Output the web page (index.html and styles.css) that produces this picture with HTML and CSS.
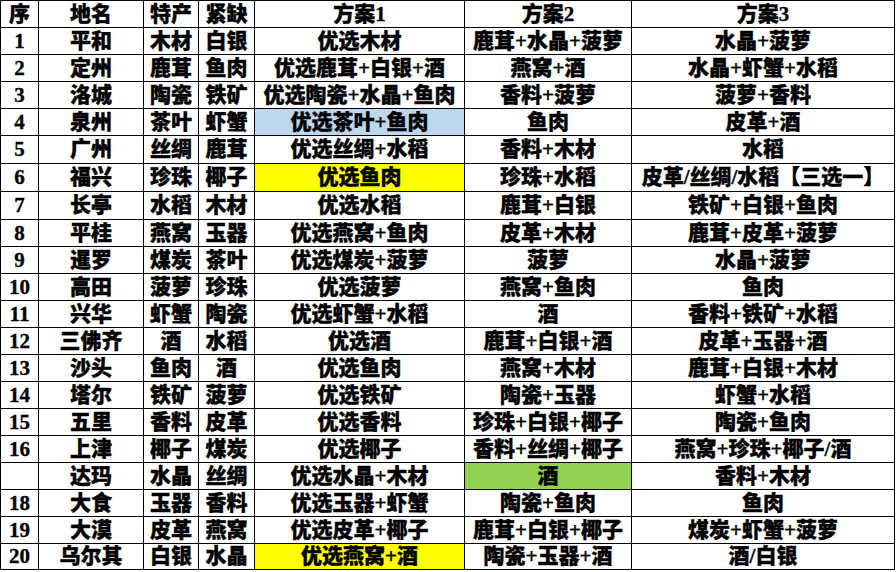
FILE: index.html
```html
<!DOCTYPE html>
<html lang="zh">
<head>
<meta charset="utf-8">
<title>方案表</title>
<link rel="stylesheet" href="styles.css">
</head>
<body>
<table class="plan">
<colgroup>
<col class="c-no"><col class="c-name"><col class="c-spec"><col class="c-lack"><col class="c-p1"><col class="c-p2"><col class="c-p3">
</colgroup>
<thead>
<tr><th>序</th><th>地名</th><th>特产</th><th>紧缺</th><th>方案1</th><th>方案2</th><th>方案3</th></tr>
</thead>
<tbody>
<tr><td>1</td><td>平和</td><td>木材</td><td>白银</td><td>优选木材</td><td>鹿茸+水晶+菠萝</td><td>水晶+菠萝</td></tr>
<tr><td>2</td><td>定州</td><td>鹿茸</td><td>鱼肉</td><td>优选鹿茸+白银+酒</td><td>燕窝+酒</td><td>水晶+虾蟹+水稻</td></tr>
<tr><td>3</td><td>洛城</td><td>陶瓷</td><td>铁矿</td><td>优选陶瓷+水晶+鱼肉</td><td>香料+菠萝</td><td>菠萝+香料</td></tr>
<tr><td>4</td><td>泉州</td><td>茶叶</td><td>虾蟹</td><td class="blue">优选茶叶+鱼肉</td><td>鱼肉</td><td>皮革+酒</td></tr>
<tr class="tall"><td>5</td><td>广州</td><td>丝绸</td><td>鹿茸</td><td>优选丝绸+水稻</td><td>香料+木材</td><td>水稻</td></tr>
<tr class="tall"><td>6</td><td>福兴</td><td>珍珠</td><td>椰子</td><td class="yellow">优选鱼肉</td><td>珍珠+水稻</td><td>皮革/丝绸/水稻【三选一】</td></tr>
<tr class="tall"><td>7</td><td>长亭</td><td>水稻</td><td>木材</td><td>优选水稻</td><td>鹿茸+白银</td><td>铁矿+白银+鱼肉</td></tr>
<tr><td>8</td><td>平桂</td><td>燕窝</td><td>玉器</td><td>优选燕窝+鱼肉</td><td>皮革+木材</td><td>鹿茸+皮革+菠萝</td></tr>
<tr><td>9</td><td>暹罗</td><td>煤炭</td><td>茶叶</td><td>优选煤炭+菠萝</td><td>菠萝</td><td>水晶+菠萝</td></tr>
<tr><td>10</td><td>高田</td><td>菠萝</td><td>珍珠</td><td>优选菠萝</td><td>燕窝+鱼肉</td><td>鱼肉</td></tr>
<tr><td>11</td><td>兴华</td><td>虾蟹</td><td>陶瓷</td><td>优选虾蟹+水稻</td><td>酒</td><td>香料+铁矿+水稻</td></tr>
<tr><td>12</td><td>三佛齐</td><td>酒</td><td>水稻</td><td>优选酒</td><td>鹿茸+白银+酒</td><td>皮革+玉器+酒</td></tr>
<tr><td>13</td><td>沙头</td><td>鱼肉</td><td>酒</td><td>优选鱼肉</td><td>燕窝+木材</td><td>鹿茸+白银+木材</td></tr>
<tr><td>14</td><td>塔尔</td><td>铁矿</td><td>菠萝</td><td>优选铁矿</td><td>陶瓷+玉器</td><td>虾蟹+水稻</td></tr>
<tr><td>15</td><td>五里</td><td>香料</td><td>皮革</td><td>优选香料</td><td>珍珠+白银+椰子</td><td>陶瓷+鱼肉</td></tr>
<tr><td>16</td><td>上津</td><td>椰子</td><td>煤炭</td><td>优选椰子</td><td>香料+丝绸+椰子</td><td>燕窝+珍珠+椰子/酒</td></tr>
<tr><td></td><td>达玛</td><td>水晶</td><td>丝绸</td><td>优选水晶+木材</td><td class="green">酒</td><td>香料+木材</td></tr>
<tr><td>18</td><td>大食</td><td>玉器</td><td>香料</td><td>优选玉器+虾蟹</td><td>陶瓷+鱼肉</td><td>鱼肉</td></tr>
<tr><td>19</td><td>大漠</td><td>皮革</td><td>燕窝</td><td>优选皮革+椰子</td><td>鹿茸+白银+椰子</td><td>煤炭+虾蟹+菠萝</td></tr>
<tr class="short"><td>20</td><td>乌尔其</td><td>白银</td><td>水晶</td><td class="yellow">优选燕窝+酒</td><td>陶瓷+玉器+酒</td><td>酒/白银</td></tr>
</tbody>
</table>
</body>
</html>
```

FILE: styles.css
```css
html, body {
  margin: 0;
  padding: 0;
  background: #ffffff;
}

.plan {
  border-collapse: collapse;
  table-layout: fixed;
  width: 895px;
  font-family: "Liberation Serif", "Noto Sans CJK SC", serif;
  font-size: 21px;
  font-weight: 900;
  color: #000000;
}

.c-no { width: 38px; }
.c-name { width: 105px; }
.c-spec { width: 55px; }
.c-lack { width: 56px; }
.c-p1 { width: 210px; }
.c-p2 { width: 167px; }
.c-p3 { width: 263px; }

.plan tr {
  height: 27px;
}

.plan tr.tall {
  height: 28px;
}

.plan tr.short {
  height: 26px;
}

.plan th,
.plan td {
  border: 1px solid #000000;
  padding: 0;
  text-align: center;
  vertical-align: middle;
  line-height: 1;
  white-space: nowrap;
  overflow: hidden;
  font-weight: 900;
  -webkit-text-stroke: 0.35px #000000;
}

.plan .blue { background: #bdd7ee; }
.plan .yellow { background: #ffff00; }
.plan .green { background: #92d050; }
```
